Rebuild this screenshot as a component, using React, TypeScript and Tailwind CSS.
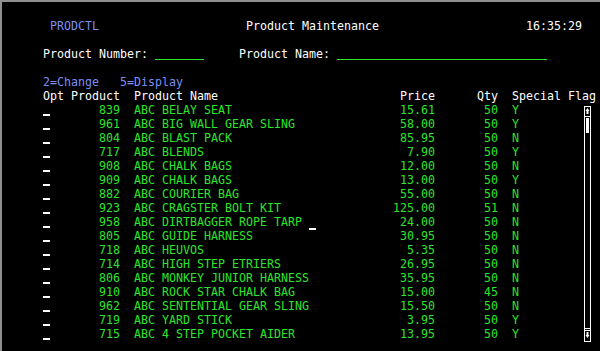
import React from "react";

const G = "text-[#2ce42c]";

const rows: [string, string, string, string, string][] = [
  ["839", "ABC BELAY SEAT", "15.61", "50", "Y"],
  ["961", "ABC BIG WALL GEAR SLING", "58.00", "50", "Y"],
  ["804", "ABC BLAST PACK", "85.95", "50", "N"],
  ["717", "ABC BLENDS", "7.90", "50", "Y"],
  ["908", "ABC CHALK BAGS", "12.00", "50", "N"],
  ["909", "ABC CHALK BAGS", "13.00", "50", "Y"],
  ["882", "ABC COURIER BAG", "55.00", "50", "N"],
  ["923", "ABC CRAGSTER BOLT KIT", "125.00", "51", "N"],
  ["958", "ABC DIRTBAGGER ROPE TARP", "24.00", "50", "N"],
  ["805", "ABC GUIDE HARNESS", "30.95", "50", "N"],
  ["718", "ABC HEUVOS", "5.35", "50", "N"],
  ["714", "ABC HIGH STEP ETRIERS", "26.95", "50", "N"],
  ["806", "ABC MONKEY JUNIOR HARNESS", "35.95", "50", "N"],
  ["910", "ABC ROCK STAR CHALK BAG", "15.00", "45", "N"],
  ["962", "ABC SENTENTIAL GEAR SLING", "15.50", "50", "N"],
  ["719", "ABC YARD STICK", "3.95", "50", "Y"],
  ["715", "ABC 4 STEP POCKET AIDER", "13.95", "50", "Y"],
];

function Row({ children }: { children?: React.ReactNode }) {
  return <div className="h-[14px] leading-[14px] whitespace-pre">{children}</div>;
}

function Scrollbar() {
  return (
    <svg
      className="absolute left-[582px] top-[104px]"
      width="8"
      height="237"
      viewBox="0 0 8 237"
      fill="none"
    >
      <rect x="0.5" y="0.5" width="6" height="235" stroke="#fff" strokeWidth="1" />
      <path d="M3.5 2 L5.5 5 L1.5 5 Z" fill="#fff" />
      <rect x="2.5" y="5" width="2" height="3" fill="#fff" />
      <line x1="0" y1="10.5" x2="7" y2="10.5" stroke="#fff" />
      <rect x="2" y="12" width="3" height="15" fill="#fff" />
      <line x1="0" y1="222.5" x2="7" y2="222.5" stroke="#fff" />
      <line x1="0" y1="224.5" x2="7" y2="224.5" stroke="#fff" />
      <rect x="2.5" y="226" width="2" height="3" fill="#fff" />
      <path d="M1.5 229 L5.5 229 L3.5 232 Z" fill="#fff" />
    </svg>
  );
}

export default function App() {
  return (
    <div
      className="relative w-[600px] h-[351px] bg-black border-t-2 border-l-2 border-[#8e8e8e] pt-[3px] pl-[34px] text-white text-[11.63px] overflow-hidden"
      style={{ fontFamily: '"DejaVu Sans Mono", "Liberation Mono", monospace' }}
    >
      <Row />
      <Row>
        {"  "}
        <span className="text-[#7b8ff4]">PRODCTL</span>
        {" ".repeat(21)}
        {"Product Maintenance"}
        {" ".repeat(21)}
        {"16:35:29"}
      </Row>
      <Row />
      <Row>
        {" Product Number: "}
        <span className="inline-block w-[49px] h-[13px] border-b border-[#2ce42c] align-top" />
        {" ".repeat(5)}
        {"Product Name: "}
        <span className="inline-block w-[210px] h-[13px] border-b border-[#2ce42c] align-top" />
      </Row>
      <Row />
      <Row>
        <span className="text-[#7b8ff4]">{" 2=Change   5=Display"}</span>
      </Row>
      <Row>
        {" Opt Product  Product Name" + " ".repeat(26) + "Price" + " ".repeat(6) + "Qty  Special Flag"}
      </Row>
      {rows.map(([num, name, price, qty, flag], i) => {
        const nameCol = name.padEnd(37);
        const tail = price.padStart(6) + qty.padStart(9) + "  " + flag;
        const head = " ".repeat(7) + num.padStart(3) + "  ";
        return (
          <Row key={num}>
            {" "}
            <span className="inline-block w-[7px] h-[13px] border-b-2 border-white align-top" />
            {i === 8 ? (
              <span className={G}>
                {head + nameCol.slice(0, 25)}
                <span className="inline-block w-[7px] h-[15px] border-b-2 border-white align-top" />
                {nameCol.slice(26) + tail}
              </span>
            ) : (
              <span className={G}>{head + nameCol + tail}</span>
            )}
          </Row>
        );
      })}
      <Scrollbar />
    </div>
  );
}
